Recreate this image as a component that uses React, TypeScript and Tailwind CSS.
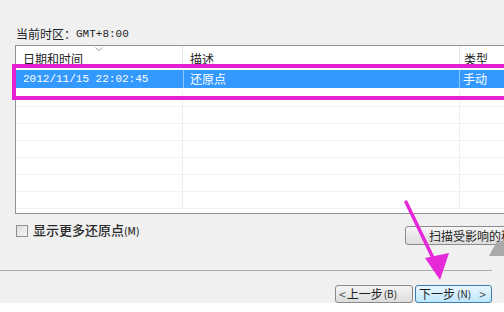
import React from 'react'

const cjk = { fontFamily: '"Noto Sans CJK SC", "Liberation Sans", sans-serif' }
const mono = { fontFamily: '"Liberation Mono", "Noto Sans CJK SC", monospace' }

export default function App() {
  const emptyRows = [0, 1, 2, 3, 4, 5, 6]

  return (
    <div
      className="relative w-[504px] h-[312px] overflow-hidden bg-[#f0f0f0] flex flex-col text-[#1e1e1e]"
      style={cjk}
    >
      {/* time zone label */}
      <div className="shrink-0 h-[45px] pl-[16px] pt-[22px] text-[12px] leading-[14px] flex items-center">
        <span className="h-[14px]">当前时区：</span>
        <span className="text-[11px]" style={mono}>GMT+8:00</span>
      </div>

      {/* restore point list */}
      <div className="shrink-0 ml-[15px] w-[520px] h-[169px] border border-[#8e9299] bg-white flex flex-col">
        <div className="shrink-0 h-[20px] flex text-[12px] leading-[14px] text-[#222]">
          <div className="relative w-[167px] border-r border-[#e3e5e8] pl-[7px] pt-[6px]">
            日期和时间
            <svg className="absolute left-[79px] top-[1px]" width="8" height="4" viewBox="0 0 8 4">
              <path d="M0.5 0.5 L4 3.5 L7.5 0.5" fill="none" stroke="#9aa4b0" strokeWidth="1" />
            </svg>
          </div>
          <div className="w-[277px] border-r border-[#e3e5e8] pl-[7px] pt-[6px]">描述</div>
          <div className="flex-1 pl-[4px] pt-[6px]">类型</div>
        </div>

        <div className="shrink-0 h-[24px] pt-[4px] pb-[2px]">
          <div className="h-[18px] bg-[#3399ff] text-white flex items-center text-[12px] leading-[14px]">
            <div className="w-[167px] pl-[7px] text-[11px]" style={mono}>2012/11/15 22:02:45</div>
            <div className="w-[277px] border-x border-[#8cc4ff] pl-[6px] h-full flex items-center">还原点</div>
            <div className="flex-1 pl-[3px]">手动</div>
          </div>
        </div>

        {emptyRows.map((r) => (
          <div key={r} className="shrink-0 h-[17px] flex border-b border-[#eef0f3]">
            <div className="w-[167px] border-r border-[#eceef1]" />
            <div className="w-[277px] border-r border-[#eceef1]" />
            <div className="flex-1" />
          </div>
        ))}
      </div>

      {/* options row */}
      <div className="shrink-0 h-[33px] flex">
        <div className="pl-[16px] pt-[9px] flex items-center h-[24px] gap-[5px]">
          <div className="w-[12px] h-[12px] border border-[#8f8f8f] bg-gradient-to-br from-[#dcdcdc] to-[#f6f6f6]" />
          <span className="text-[13px] leading-[14px] font-medium text-[#2a2a2a]">
            显示更多还原点<span className="text-[10px]">(M)</span>
          </span>
        </div>
        <div className="ml-auto mt-[12px] mr-[-101px] w-[200px] h-[19px] rounded-[3px] border border-[#8c8c8c] bg-gradient-to-b from-[#f6f6f6] to-[#dddddd] text-[12px] leading-[17px] pl-[23px] text-[#222]">
          扫描受影响的程序
        </div>
      </div>

      {/* separator */}
      <div className="shrink-0 mt-[23px] w-[492px] h-px bg-[#a9a9a9]" />

      {/* wizard buttons */}
      <div className="shrink-0 mt-[14px] h-[18px] flex justify-end pr-[12px] gap-[2px] text-[12px] leading-[16px]">
        <div className="w-[78px] h-full rounded-[3px] border border-[#8a8a8a] bg-gradient-to-b from-[#f4f4f4] to-[#dcdcdc] flex items-center pl-[3px] gap-[1px]">
          <span className="text-[#555]">&lt;</span>
          <span>上一步</span>
          <span className="text-[10px]">(B)</span>
        </div>
        <div className="w-[77px] h-full rounded-[3px] border border-[#3c7fb1] bg-gradient-to-b from-[#eaf6fd] to-[#bee6fd] flex items-center pl-[3px] gap-[2px]">
          <span>下一步</span>
          <span className="text-[10px]">(N)</span>
          <span className="ml-auto mr-[5px] text-[#555]">&gt;</span>
        </div>
      </div>

      <div className="flex-1 bg-white" />

      {/* annotation: highlight box */}
      <div className="absolute left-[12px] top-[64px] w-[500px] h-[36px] border-[4px] border-[#e61fd2]" />

      {/* annotation: arrow and grey shape */}
      <svg className="absolute left-0 top-0 pointer-events-none" width="504" height="312" viewBox="0 0 504 312">
        <polygon points="496,243 504,240 504,256 489,256" fill="#a9a9a9" />
        <line x1="406" y1="202" x2="435" y2="262" stroke="#e629d8" strokeWidth="3.5" strokeLinecap="round" />
        <polygon points="425,258 449,253 440,280" fill="#e629d8" />
      </svg>
    </div>
  )
}
